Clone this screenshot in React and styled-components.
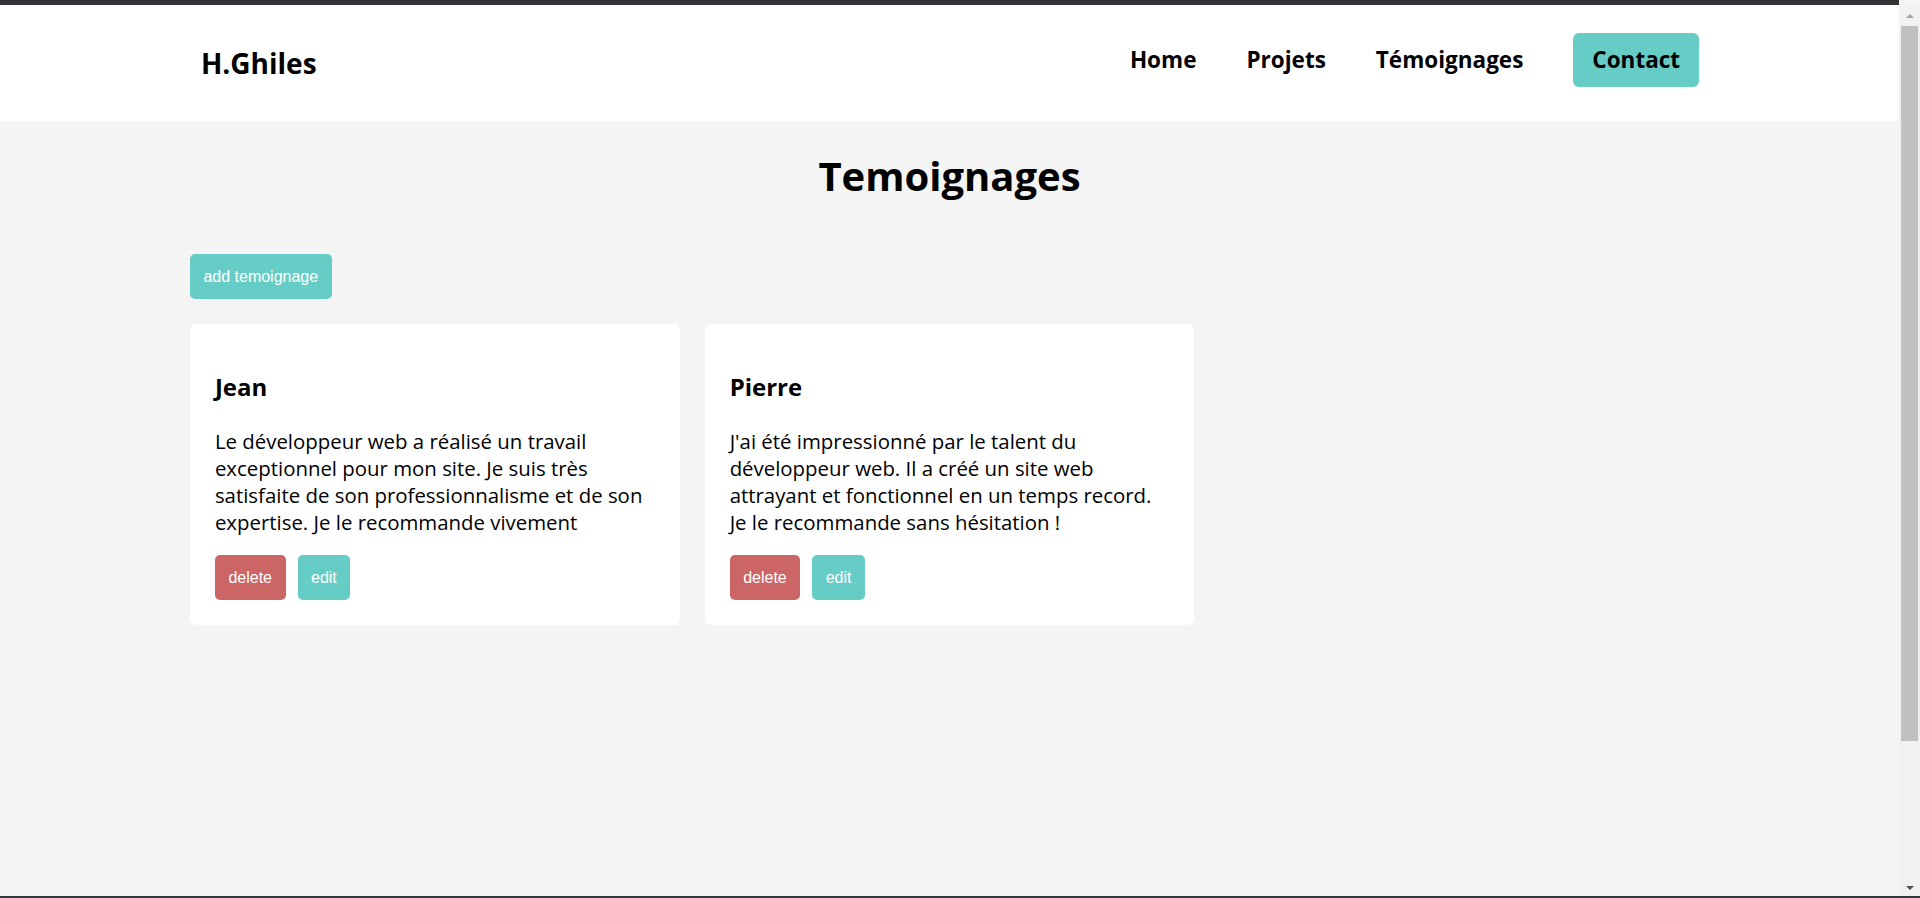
import React from 'react';
import styled, { createGlobalStyle } from 'styled-components';

const teal = '#66cdc6';
const red = '#cc6565';

const GlobalStyle = createGlobalStyle`
  html {
    background: #f4f4f4;
  }

  body {
    margin: 0 21px 0 0;
    border-top: 5px solid #333438;
    background: #f4f4f4;
    color: #000;
    font-family: 'Open Sans', 'Noto Sans', sans-serif;
    line-height: 1.5;
  }
`;

// browser chrome seen in the screenshot: scrollbar on the right, thin frame at the bottom
const ScrollTrack = styled.div`
  position: fixed;
  top: 5px;
  right: 0;
  bottom: 0;
  width: 21px;
  background: #f1f1f1;
  display: flex;
  flex-direction: column;
  align-items: center;
  z-index: 10;
`;

const ScrollArrow = styled.div`
  height: 21px;
  width: 100%;
  display: flex;
  align-items: center;
  justify-content: center;

  &::after {
    content: '';
    border-left: 4px solid transparent;
    border-right: 4px solid transparent;
    ${({ $down }) => $down
      ? 'border-top: 4px solid #505050;'
      : 'border-bottom: 4px solid #a3a3a3;'}
  }
`;

const ScrollThumb = styled.div`
  width: 17px;
  height: 715px;
  background: #c1c1c1;
`;

const Spacer = styled.div`
  flex: 1;
`;

const WindowEdge = styled.div`
  position: fixed;
  left: 0;
  right: 0;
  bottom: 0;
  height: 2px;
  background: #333438;
  z-index: 11;
`;

const Header = styled.header`
  background: #fff;
`;

const HeaderInner = styled.div`
  width: 80%;
  height: 116px;
  margin: 0 auto;
  padding: 0 10px 6px 11px;
  box-sizing: border-box;
  display: flex;
  align-items: center;
  justify-content: space-between;
`;

const Logo = styled.a`
  font-size: 28px;
  font-weight: 700;
  color: #000;
  text-decoration: none;
  padding-top: 6px;
`;

const Nav = styled.nav`
  display: flex;
  align-items: center;
  gap: 50px;
`;

const NavLink = styled.a`
  font-size: 22.5px;
  font-weight: 700;
  color: #000;
  text-decoration: none;
  ${({ $button }) => $button && `
    background: ${teal};
    border-radius: 6px;
    padding: 10px 19px 11px;
  `}
`;

const Main = styled.main`
  width: 80%;
  margin: 0 auto;
`;

const Title = styled.h1`
  margin: 27px 0 0;
  text-align: center;
  font-size: 40px;
  font-weight: 700;
  line-height: normal;
`;

const Button = styled.button`
  height: 45px;
  padding: 0 13.5px;
  border: none;
  border-radius: 5px;
  background: ${({ $color }) => $color};
  color: #fff;
  font-family: 'Liberation Sans', Arial, sans-serif;
  font-size: 16px;
  cursor: pointer;
`;

const AddButton = styled(Button)`
  margin-top: 51px;
`;

const Grid = styled.div`
  margin-top: 25px;
  display: grid;
  grid-template-columns: repeat(3, 1fr);
  gap: 25px;
  align-items: start;
`;

const Card = styled.div`
  background: #fff;
  border-radius: 6px;
  padding: 25px;
`;

const Name = styled.h2`
  margin: 20px 0 0;
  font-size: 24px;
  font-weight: 700;
`;

const Text = styled.p`
  margin: 23px 0 0;
  font-size: 20.4px;
  line-height: 27px;
`;

const Actions = styled.div`
  margin-top: 19px;
  display: flex;
  gap: 12px;
`;

const temoignages = [
  {
    id: 1,
    name: 'Jean',
    text: "Le développeur web a réalisé un travail exceptionnel pour mon site. Je suis très satisfaite de son professionnalisme et de son expertise. Je le recommande vivement"
  },
  {
    id: 2,
    name: 'Pierre',
    text: "J'ai été impressionné par le talent du développeur web. Il a créé un site web attrayant et fonctionnel en un temps record. Je le recommande sans hésitation !"
  }
];

const App = () => (
  <>
    <GlobalStyle />
    <Header>
      <HeaderInner>
        <Logo href="#">H.Ghiles</Logo>
        <Nav>
          <NavLink href="#">Home</NavLink>
          <NavLink href="#">Projets</NavLink>
          <NavLink href="#">Témoignages</NavLink>
          <NavLink href="#" $button>Contact</NavLink>
        </Nav>
      </HeaderInner>
    </Header>
    <Main>
      <Title>Temoignages</Title>
      <AddButton $color={teal}>add temoignage</AddButton>
      <Grid>
        {temoignages.map(t => (
          <Card key={t.id}>
            <Name>{t.name}</Name>
            <Text>{t.text}</Text>
            <Actions>
              <Button $color={red}>delete</Button>
              <Button $color={teal}>edit</Button>
            </Actions>
          </Card>
        ))}
      </Grid>
    </Main>
    <ScrollTrack>
      <ScrollArrow />
      <ScrollThumb />
      <Spacer />
      <ScrollArrow $down />
    </ScrollTrack>
    <WindowEdge />
  </>
);

export default App;
